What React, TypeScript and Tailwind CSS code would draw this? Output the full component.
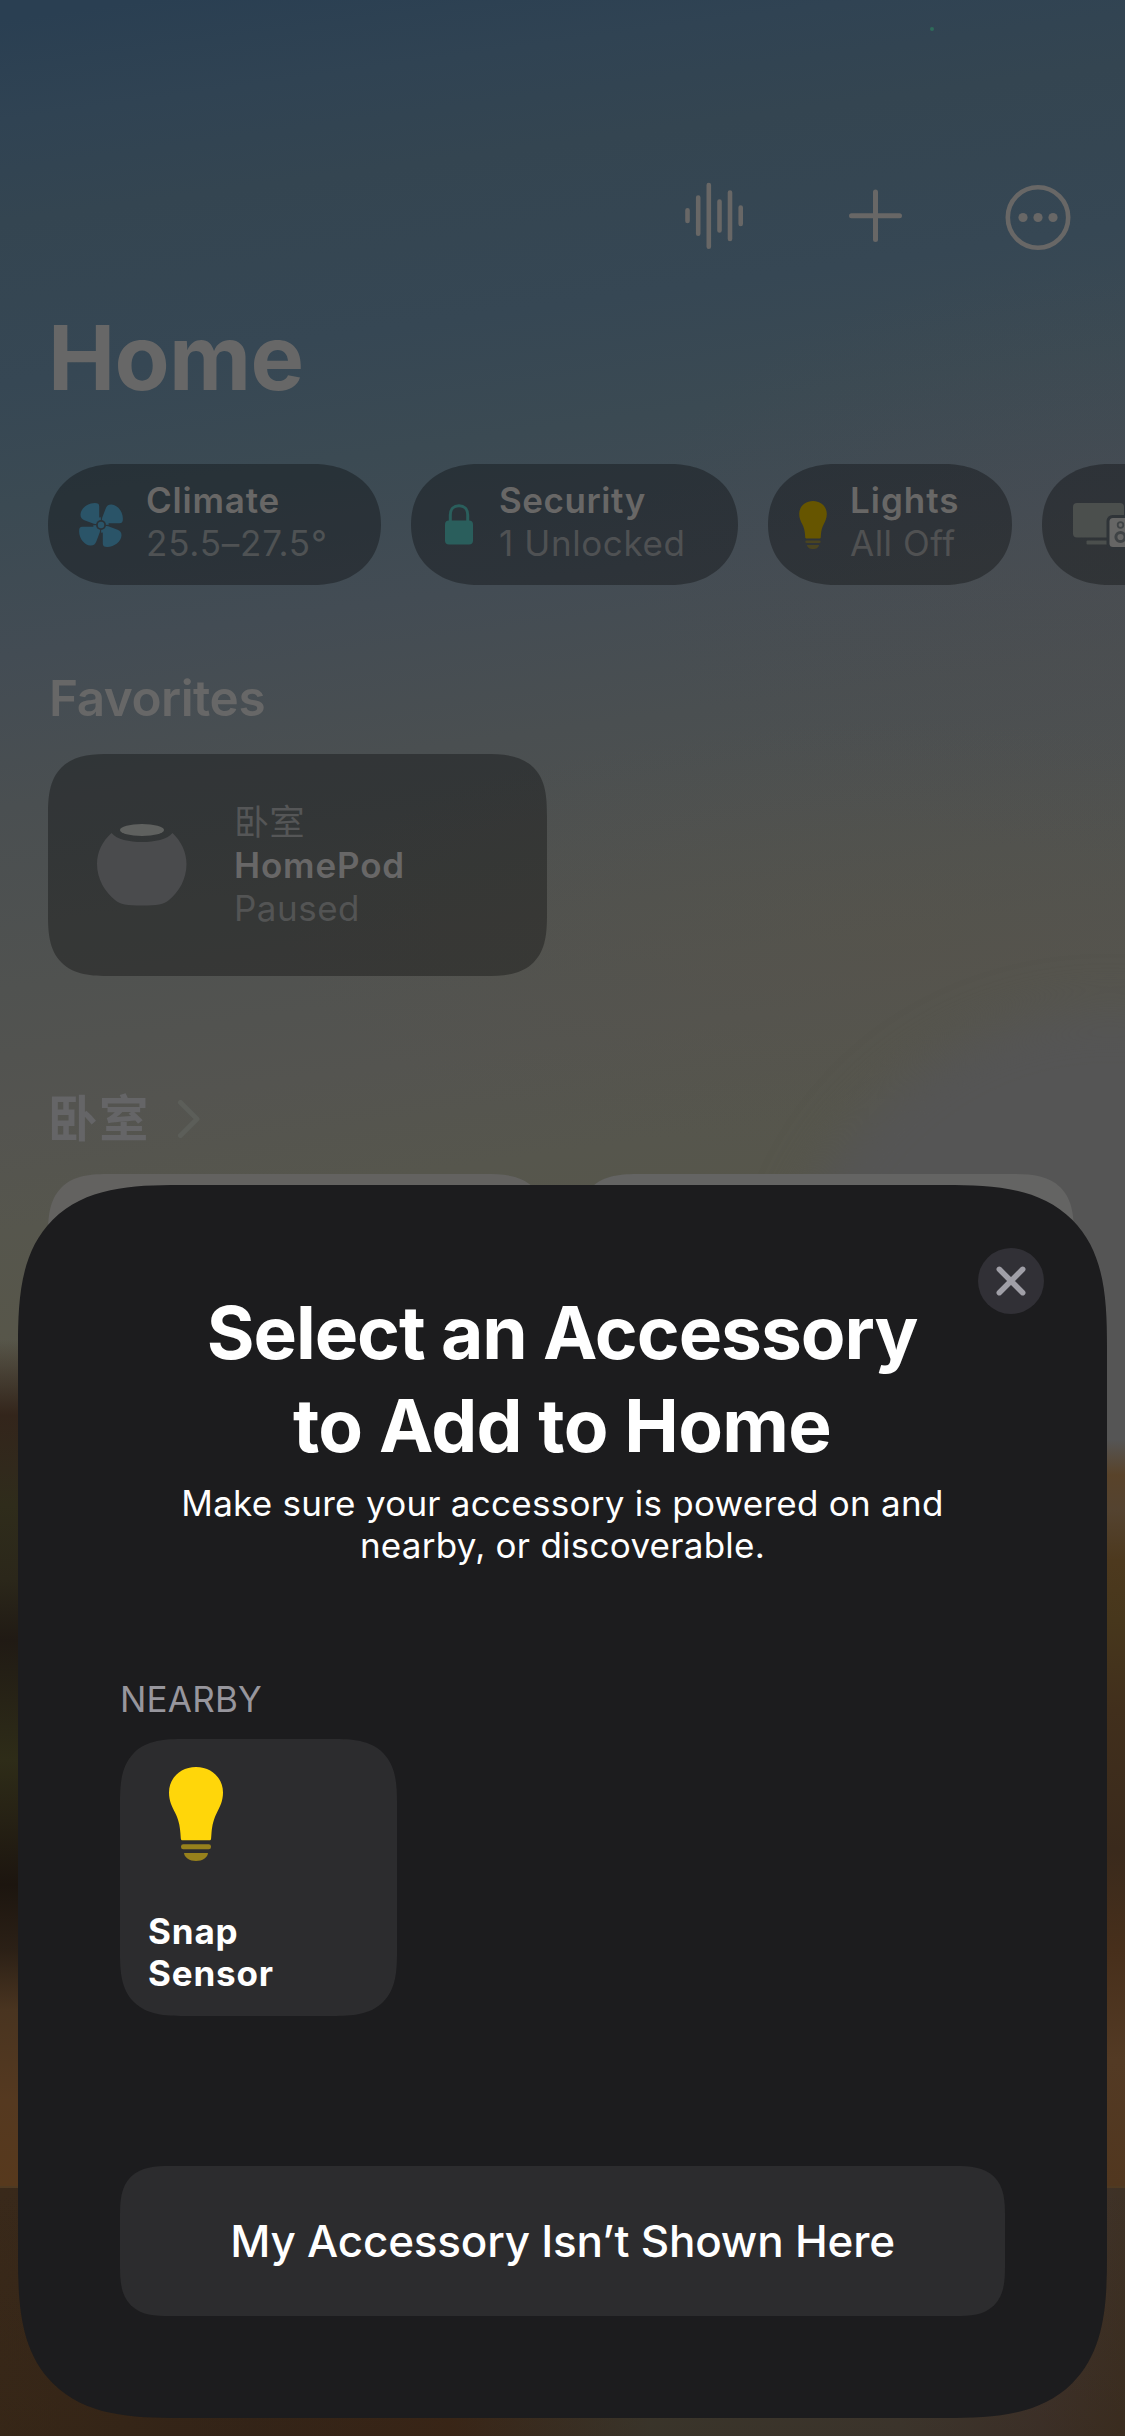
import type { ReactNode } from "react";

function Wallpaper() {
  return (
    <div aria-hidden className="absolute inset-0 overflow-hidden">
      <div className="absolute inset-0 bg-[linear-gradient(172deg,#2a3f52_20px,#304353_120px,#344551_220px,#364754_380px,#3b4a53_500px,#434c54_650px,#4a4f51_800px,#505250_980px,#545450_1110px,#56564d_1220px,#57564a_1320px,#575446_1400px,#534f42_1540px)]" />
      <div className="absolute inset-0 bg-[radial-gradient(620px_220px_at_900px_940px,rgba(88,84,72,0.45),rgba(88,84,72,0)),radial-gradient(500px_300px_at_1125px_560px,rgba(78,76,80,0.3),rgba(78,76,80,0))]" />
      <div className="absolute top-[1010px] left-[780px] h-[700px] w-[660px] rounded-full bg-[#555555] blur-[24px]" />
      <div className="absolute bottom-0 left-0 h-[1096px] w-[563px] bg-[linear-gradient(180deg,rgba(51,37,27,0)_0px,#33251b_75px,#31291c_130px,#2f2c1b_165px,#2b271a_240px,#201a14_300px,#2e2c18_420px,#262114_480px,#1c150f_545px,#2b2016_610px,#493420_670px,#553920_760px,#57391d_846px,#57391d_1096px)]" />
      <div className="absolute bottom-0 right-0 h-[996px] w-[562px] bg-[linear-gradient(180deg,rgba(90,68,36,0)_0px,#59432a_35px,#544330_70px,#4d391e_120px,#47371c_180px,#412f1c_270px,#3a2a1c_410px,#472f1b_510px,#533a24_620px,#51371f_745px,#51371f_996px)]" />
      <div className="absolute inset-x-0 bottom-0 h-[250px] border-t-2 border-[#4f3a22] bg-[linear-gradient(180deg,rgba(0,0,0,0),rgba(48,32,16,0.3)),linear-gradient(90deg,#39291a_0px,#35251a_250px,#3c2719_450px,#3d3c34_650px,#403c36_900px,#403530_1040px,#3e3125_1125px)]" />
    </div>
  );
}

function FanIcon() {
  return (
    <svg viewBox="0 0 44 44" className="size-11" fill="#2a5468">
      {[0, 90, 180, 270].map((a) => (
        <path
          key={a}
          transform={`rotate(${a} 22 22)`}
          d="M20.200 3.500C20.200 1 19 .1 15.800 .1C8.500 .1 1.800 5.500 1.500 11.500C1.400 14.800 2.800 16.300 6 17.500L14.800 20.800L22 22L21.800 14.200L20.200 14.500Z"
        />
      ))}
      <circle cx="22" cy="22" r="5" fill="#2b3338" />
      <circle cx="22" cy="22" r="3.2" />
    </svg>
  );
}

function LockIcon() {
  return (
    <svg viewBox="0 0 28 41" className="h-[41px] w-7">
      <path d="M5.300 18V11C5.300 5 9 1.700 14 1.700S22.700 5 22.700 11V18" fill="none" stroke="#2a5e5c" strokeWidth="3" />
      <rect y="16.500" width="28" height="24" rx="4" fill="#2a5e5c" />
    </svg>
  );
}

function BulbIcon({ className, glass, base }: { className: string; glass: string; base: string }) {
  return (
    <svg viewBox="0 0 54 94" className={className}>
      <path
        fill={glass}
        d="M27 0C11.500 0 0 11 0 25.500C0 34 3 39.500 6 45.500C9.500 52.500 10.800 58 11.400 66L11.800 71.500C11.900 72.800 12.500 73.300 13.800 73.300H40.200C41.500 73.300 42 72.800 42.100 71.500L42.500 66C43.200 58 44.500 52.500 48 45.500C51 39.500 54 34 54 25.500C54 11 42.500 0 27 0Z"
      />
      <rect x="12" y="77.300" width="30" height="5" rx="2.300" fill={base} />
      <path d="M15 86H39C38.500 90.500 33.500 94 27 94S15.500 90.500 15 86Z" fill={base} />
    </svg>
  );
}

function MediaIcon() {
  return (
    <svg viewBox="0 0 72 46" className="h-[46px] w-[72px] shrink-0 overflow-visible">
      <rect y="1" width="51" height="34.500" rx="4" fill="#4b4f4d" />
      <rect x="13.500" y="38.500" width="30" height="4" rx="1" fill="#4b4f4d" />
      <rect x="33.500" y="13" width="30" height="35" rx="6" fill="#2f3438" />
      <rect x="36.500" y="16" width="22" height="29" rx="3.500" fill="#666665" />
      <circle cx="47.500" cy="23" r="2.800" fill="none" stroke="#3f4345" strokeWidth="1.800" />
      <circle cx="47.500" cy="35" r="4.600" fill="none" stroke="#3f4345" strokeWidth="3" />
    </svg>
  );
}

function HomePodIcon() {
  return (
    <svg viewBox="0 0 90 82" className="h-[82px] w-[90px]">
      <path
        fill="#4a4b4d"
        d="M14.500 9C5.500 17 0 28 0 40C0 55 8 68 18 76C23 80.500 30 81.500 45 81.500S67 80.500 72 76C82 68 89.500 55 89.500 40C89.500 28 84 17 75.500 9C70 15.500 58 18 45 18S20 15.500 14.500 9Z"
      />
      <ellipse cx="45" cy="6" rx="22" ry="6" fill="#5f615f" />
    </svg>
  );
}

function Pill({
  width,
  pad,
  icon,
  children,
}: {
  width: string;
  pad: string;
  icon: ReactNode;
  children?: ReactNode;
}) {
  return (
    <div
      className={`flex h-[121px] shrink-0 items-center rounded-[68px/60.5px] bg-black/32 [corner-shape:superellipse(1.12)] ${width} ${pad}`}
    >
      {icon}
      {children}
    </div>
  );
}

function HomeScreen() {
  return (
    <main className="relative flex h-full flex-col px-12">
      <div className="flex h-[302px] shrink-0 items-start justify-end pt-[182px] pr-[6px]">
        <svg viewBox="0 0 58 68" className="mr-[106px] h-[68px] w-[58px]" stroke="#686766" strokeWidth="4.600" strokeLinecap="round">
          <path d="M2.500 28.300V39M13.200 15.500V51.800M23.800 3V64.800M34.500 19.500V48.500M45 10.500V57M55.700 25.500V42" />
        </svg>
        <svg viewBox="0 0 53 68" className="mr-[103.500px] h-[68px] w-[53px]" stroke="#686766" strokeWidth="5" strokeLinecap="round">
          <path d="M2.500 33.700H50.500M26.500 10V57.500" />
        </svg>
        <svg viewBox="0 0 66 68" className="h-[68px] w-[66px]" fill="#686766">
          <circle cx="33" cy="35.500" r="30.200" fill="none" stroke="#686766" strokeWidth="4.600" />
          <circle cx="18" cy="35.500" r="4.600" />
          <circle cx="33" cy="35.500" r="4.600" />
          <circle cx="48" cy="35.500" r="4.600" />
        </svg>
      </div>

      <h1 className="pt-px text-[90px] leading-[110px] font-bold tracking-[-0.7px] text-[#676767]">Home</h1>

      <div className="mt-[51px] flex gap-[30px] text-[35px] leading-[43px]">
        <Pill width="w-[333px]" pad="pl-[31px]" icon={<FanIcon />}>
          <div className="-mt-[5px] pl-[23px]">
            <p className="font-semibold tracking-[0.8px] text-[#686766]">Climate</p>
            <p className="tracking-[0.8px] whitespace-nowrap text-[#4f5254]">25.5–27.5°</p>
          </div>
        </Pill>
        <Pill width="w-[327px]" pad="pl-[34px]" icon={<LockIcon />}>
          <div className="-mt-[5px] pl-[26px]">
            <p className="font-semibold tracking-[0.55px] text-[#686766]">Security</p>
            <p className="tracking-[0.6px] whitespace-nowrap text-[#4f5153]">1 Unlocked</p>
          </div>
        </Pill>
        <Pill
          width="w-[244px]"
          pad="pl-[31px]"
          icon={<BulbIcon className="h-12 w-[28px]" glass="#665500" base="#4a4420" />}
        >
          <div className="-mt-[5px] pl-[23px]">
            <p className="font-semibold tracking-[1px] text-[#686766]">Lights</p>
            <p className="tracking-[0.5px] whitespace-nowrap text-[#505152]">All Off</p>
          </div>
        </Pill>
        <Pill width="w-[240px]" pad="pl-[31px]" icon={<MediaIcon />} />
      </div>

      <h2 className="mt-[83px] pl-px text-[49.5px] leading-[60px] font-semibold tracking-[-0.5px] text-[#676767]">
        Favorites
      </h2>
      <section className="mt-[26px] flex h-[222px] w-[499px] shrink-0 items-center rounded-[62px] bg-black/32 pl-[49px] [corner-shape:superellipse(1.5)]">
        <HomePodIcon />
        <div className="pt-px pl-[47px] text-[35px] leading-[43px]">
          <p className="tracking-[0.5px] text-[#555657]">卧室</p>
          <p className="font-semibold tracking-[0.85px] text-[#686767]">HomePod</p>
          <p className="tracking-[0.5px] text-[#535454]">Paused</p>
        </div>
      </section>

      <div className="mt-[113px] flex items-center">
        <h2 className="text-[49.5px] leading-[60px] font-bold tracking-[1.500px] text-[#656567]">卧室</h2>
        <svg viewBox="0 0 22 38" className="ml-[28px] h-[38px] w-[22px]" fill="none" stroke="#5c5e59" strokeWidth="5" strokeLinecap="round" strokeLinejoin="round">
          <path d="M2.500 2.500L19 19L2.500 35.500" />
        </svg>
      </div>
      <div className="mt-[25px] flex gap-[31px]">
        <div className="h-[222px] w-[499px] shrink-0 rounded-[62px] bg-[#636260] [corner-shape:superellipse(1.5)]" />
        <div className="h-[222px] w-[496px] shrink-0 rounded-[62px] bg-[#646463] [corner-shape:superellipse(1.5)]" />
      </div>
    </main>
  );
}

function AddAccessorySheet() {
  return (
    <div
      role="dialog"
      className="absolute top-[1185px] left-[18px] flex h-[1233px] w-[1089px] flex-col rounded-[162px] bg-[#1c1c1e] px-[102px] pt-[101px] text-white [corner-shape:superellipse(1.52)]"
    >
      <button
        aria-label="Close"
        className="absolute top-[63px] right-[63px] flex size-[66px] items-center justify-center rounded-full bg-[#313036]"
      >
        <svg viewBox="0 0 30 30" className="size-[30px]" stroke="#a09fa7" strokeWidth="5.500" strokeLinecap="round">
          <path d="M3.300 3.300L26.700 26.700M26.700 3.300L3.300 26.700" />
        </svg>
      </button>
      <h1 className="-ml-px text-center text-[73px] leading-[93px] font-bold whitespace-nowrap">
        <span className="block tracking-[-1.030px]">Select an Accessory</span>
        <span className="block tracking-[-0.7px]">to Add to Home</span>
      </h1>
      <p className="mt-[10px] text-center text-[35px] leading-[42px] tracking-[0.26px] whitespace-nowrap">
        Make sure your accessory is powered on and
        <br />
        nearby, or discoverable.
      </p>
      <h2 className="mt-[112px] text-[35px] leading-[42px] tracking-[0.2px] text-[#97969d]">NEARBY</h2>
      <button className="mt-[19px] flex size-[277px] flex-col items-start rounded-[64px] bg-[#2c2c2e] px-7 pt-7 pb-[22px] text-left text-[35px] leading-[42px] font-bold tracking-[0.85px] [corner-shape:superellipse(1.5)]">
        <BulbIcon className="ml-[21px] h-[94px] w-[54px]" glass="#ffd60a" base="#97811c" />
        <span className="mt-auto">
          Snap
          <br />
          Sensor
        </span>
      </button>
      <button className="mt-[150px] h-[150px] shrink-0 rounded-[50px] bg-[#2c2c2e] pb-px text-[44px] font-medium tracking-[-0.2px] [corner-shape:superellipse(1.5)]">
        My Accessory Isn’t Shown Here
      </button>
    </div>
  );
}

export default function App() {
  return (
    <div className="relative h-[2436px] w-[1125px] overflow-hidden bg-[#344551] font-['Inter','Noto_Sans_CJK_SC',sans-serif]">
      <Wallpaper />
      <span className="absolute top-[27px] left-[930px] size-1 rounded-full bg-[#2f6b5a]" />
      <HomeScreen />
      <AddAccessorySheet />
    </div>
  );
}
